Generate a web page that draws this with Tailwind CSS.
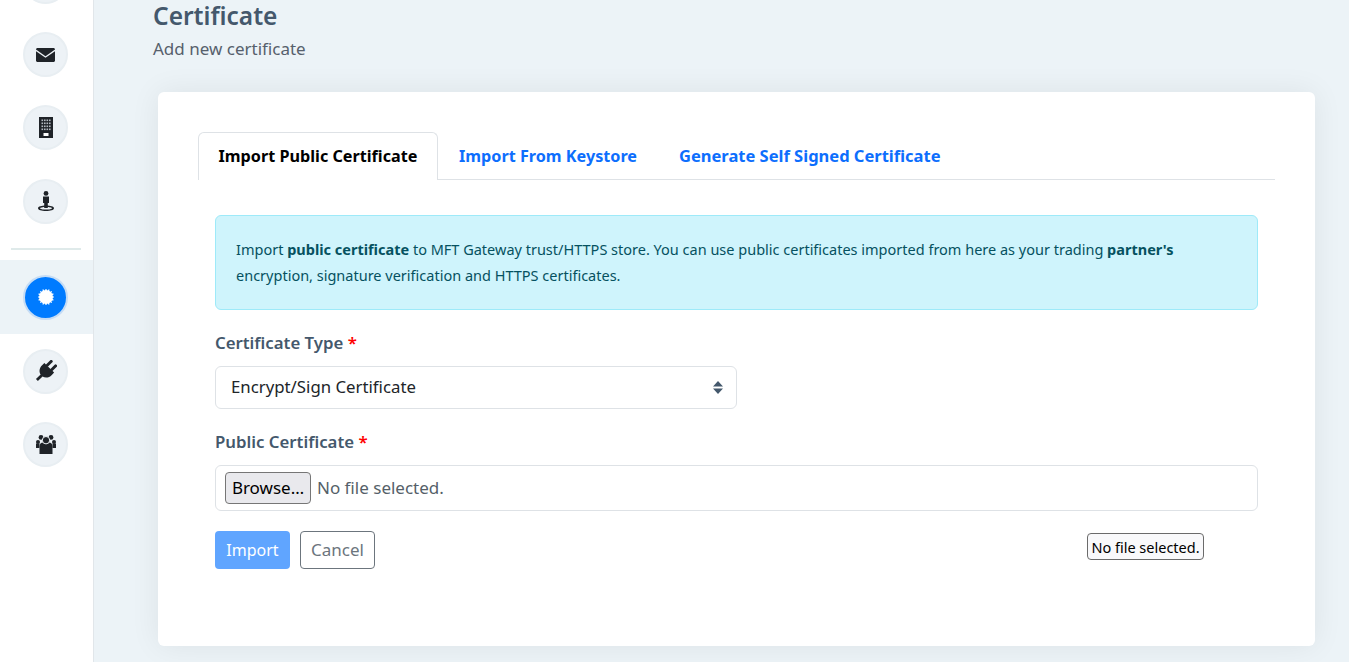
<!DOCTYPE html>
<html>
<head>
<meta charset="utf-8">
<script src="https://cdn.jsdelivr.net/npm/@tailwindcss/browser@4"></script>
</head>
<body class="m-0 h-[662px] w-[1349px] overflow-hidden bg-[#ecf3f7] font-['Noto_Sans',sans-serif]">
<div class="flex h-[662px] w-[1349px]">
  <aside class="flex h-full w-[94px] shrink-0 flex-col overflow-hidden border-r border-[#e1e6ea] bg-white">
    <div class="-mt-[55px] flex h-[73px] shrink-0 items-center justify-center pr-[2px]"><span class="h-[45px] w-[45px] rounded-full border-2 border-[#e8eef2] bg-[#edf2f6]"></span></div>
    <div class="flex h-[73px] shrink-0 items-center justify-center pr-[2px]">
      <span class="flex h-[45px] w-[45px] items-center justify-center rounded-full border-2 border-[#e8eef2] bg-[#edf2f6]">
        <svg class="h-[14px] w-[19px]" viewBox="0 0 19 14" fill="#1f2328"><path d="M0 1 1 0h17l1 1v.6L9.500 8.200 0 1.600z"/><path d="M0 3.200 9.500 9.800 19 3.200V13l-1 1H1l-1-1z"/></svg>
      </span>
    </div>
    <div class="flex h-[73px] shrink-0 items-center justify-center pr-[2px]">
      <span class="flex h-[45px] w-[45px] items-center justify-center rounded-full border-2 border-[#e8eef2] bg-[#edf2f6]">
        <svg class="h-[21px] w-[14px]" viewBox="0 0 14 21"><rect width="14" height="21" fill="#1f2328"/><g fill="#b4bac0"><rect x="2.500" y="2.500" width="1.600" height="1.600"/><rect x="5" y="2.500" width="1.600" height="1.600"/><rect x="7.500" y="2.500" width="1.600" height="1.600"/><rect x="10" y="2.500" width="1.600" height="1.600"/><rect x="2.500" y="5.500" width="1.600" height="1.600"/><rect x="5" y="5.500" width="1.600" height="1.600"/><rect x="7.500" y="5.500" width="1.600" height="1.600"/><rect x="10" y="5.500" width="1.600" height="1.600"/><rect x="2.500" y="8.500" width="1.600" height="1.600"/><rect x="5" y="8.500" width="1.600" height="1.600"/><rect x="7.500" y="8.500" width="1.600" height="1.600"/><rect x="10" y="8.500" width="1.600" height="1.600"/><rect x="2.500" y="11.500" width="1.600" height="1.600"/><rect x="5" y="11.500" width="1.600" height="1.600"/><rect x="7.500" y="11.500" width="1.600" height="1.600"/><rect x="10" y="11.500" width="1.600" height="1.600"/></g><rect x="4.500" y="16" width="5" height="3" fill="#fff"/></svg>
      </span>
    </div>
    <div class="flex h-[74px] shrink-0 items-center justify-center pr-[2px]">
      <span class="flex h-[45px] w-[45px] items-center justify-center rounded-full border-2 border-[#e8eef2] bg-[#edf2f6]">
        <svg class="h-[20px] w-[16px]" viewBox="0 0 16 20" fill="#1f2328"><circle cx="8" cy="2.400" r="2.400"/><path d="M5 5.500h6v6.500H9.800v5H6.200v-5H5z"/><path fill-rule="evenodd" d="M8 14.500c-4.400 0-8 1-8 2.700S3.600 20 8 20s8-1.100 8-2.800-3.600-2.700-8-2.700zm0 1.400c3.200 0 6 .6 6 1.300s-2.800 1.400-6 1.400-6-.7-6-1.400 2.800-1.300 6-1.300z"/></svg>
      </span>
    </div>
    <div class="ml-[11px] mt-[10px] h-[2px] w-[70px] shrink-0 bg-[#dfeaea]"></div>
    <div class="mt-[10px] flex h-[74px] shrink-0 items-center justify-center bg-[#ecf3f7] pr-[2px]">
      <span class="flex h-[45px] w-[45px] items-center justify-center rounded-full border-2 border-[#c5dcf5] bg-[#007bff]">
        <svg class="h-4 w-4" viewBox="0 0 16 16" fill="#fff"><circle cx="8" cy="8" r="7"/><g stroke="#fff" stroke-width="1.200"><path d="M8 0v16M0 8h16M2.300 2.300l11.400 11.400M13.700 2.300 2.300 13.700M4.900.6l6.200 14.800M11.100.6 4.900 15.400M.6 4.900l14.800 6.200M15.400 4.900.6 11.100"/></g></svg>
      </span>
    </div>
    <div class="flex h-[74px] shrink-0 items-center justify-center pr-[2px]">
      <span class="flex h-[45px] w-[45px] items-center justify-center rounded-full border-2 border-[#e8eef2] bg-[#edf2f6]">
        <svg class="h-[22px] w-[22px]" viewBox="0 0 24 24" fill="#1f2328"><g transform="rotate(45 12 12)"><rect x="7" y="-1" width="3.200" height="9" rx="1.400"/><rect x="13.800" y="-1" width="3.200" height="9" rx="1.400"/><path d="M4.500 7h15v3.500c0 4.500-2.500 7.500-6 8.300V26h-3v-7.200c-3.500-.8-6-3.800-6-8.300z"/></g></svg>
      </span>
    </div>
    <div class="flex h-[73px] shrink-0 items-center justify-center pr-[2px]">
      <span class="flex h-[45px] w-[45px] items-center justify-center rounded-full border-2 border-[#e8eef2] bg-[#edf2f6]">
        <svg class="h-[19px] w-[20px]" viewBox="0 0 20 19" fill="#1f2328"><circle cx="5" cy="2.400" r="2.400"/><circle cx="15" cy="2.400" r="2.400"/><circle cx="2" cy="7" r="2"/><circle cx="18" cy="7" r="2"/><path d="M0 8.500h3.500v4.500H0zM16.500 8.500H20v4.500h-3.500z"/><path d="M3.500 11.500c0-2.500 1.500-4 3.500-4h6c2 0 3.500 1.500 3.500 4V19h-13z"/><circle cx="10" cy="5.200" r="3.700" stroke="#edf2f6" stroke-width="1"/></svg>
      </span>
    </div>
  </aside>
  <main class="relative min-w-0 flex-1">
    <header class="ml-[59px]">
      <h1 class="m-0 text-[24.5px] font-semibold leading-[32px] text-[#44586c]">Certificate</h1>
      <p class="mt-[5px] text-[17px] leading-[24px] text-[#56606c]">Add new certificate</p>
    </header>
    <section class="relative ml-[64px] mt-[31px] h-[554px] w-[1157px] rounded-md bg-white px-[40px] pt-[40px] shadow-[0_0_30px_rgba(0,0,0,0.07)]">
      <nav class="flex h-[48px] border-b border-[#dee2e6]">
        <div class="-mb-px flex h-[48px] w-[240px] items-center justify-center rounded-t-md border border-b-0 border-[#dee2e6] bg-white text-[16.2px] font-bold text-black">Import Public Certificate</div>
        <div class="flex h-[48px] items-center px-[21px] text-[16.2px] font-bold text-[#0d6efd]">Import From Keystore</div>
        <div class="flex h-[48px] items-center px-[21px] text-[16.5px] font-bold text-[#0d6efd]">Generate Self Signed Certificate</div>
      </nav>
      <div class="mx-[17px] mt-[35px]">
        <div class="h-[95px] rounded-md border border-[#9eeaf9] bg-[#cff4fc] px-[20px] py-[20px] text-[14.5px] leading-[26px] text-[#055160]">Import <b>public certificate</b> to MFT Gateway trust/HTTPS store. You can use public certificates imported from here as your trading <b>partner's</b><br>encryption, signature verification and HTTPS certificates.</div>
        <label class="mt-[21px] block h-[24px] text-[16.8px] font-semibold leading-[24px] text-[#44586c]">Certificate Type <span class="text-[#ff0000]">*</span></label>
        <div class="mt-[11px] flex h-[43px] w-[522px] items-center justify-between rounded-md border border-[#dee2e6] bg-white pl-[15px] pr-[13px] text-[16.8px] text-[#212529]">
          <span class="pb-[2px]">Encrypt/Sign Certificate</span>
          <svg class="h-[13px] w-[10px]" viewBox="0 0 10 13" fill="#44586c"><path d="M5 0l5 5.500H0zM5 13 0 7.500h10z"/></svg>
        </div>
        <label class="mt-[21px] block h-[24px] text-[16.8px] font-semibold leading-[24px] text-[#44586c]">Public Certificate <span class="text-[#ff0000]">*</span></label>
        <div class="mt-[11px] flex h-[46px] items-center rounded-md border border-[#dee2e6] bg-white pl-[9px]">
          <span class="flex h-[32px] w-[86px] items-center justify-center rounded-[4px] border border-[#767676] bg-[#e9e9ed] text-[17px] text-black">Browse…</span>
          <span class="ml-[6px] text-[17px] text-[#555f69]">No file selected.</span>
        </div>
        <div class="mt-[20px] flex gap-[10px]">
          <span class="flex h-[38px] w-[75px] items-center justify-center rounded-[4px] bg-[#60a5ff] text-[16px] text-white">Import</span>
          <span class="flex h-[38px] w-[75px] items-center justify-center rounded-[4px] border border-[#6c757d] bg-white text-[17px] text-[#6c757d]">Cancel</span>
        </div>
      </div>
      <div class="absolute left-[929px] top-[441px] flex h-[27px] w-[117px] items-center justify-center rounded-[4px] border border-[#6b6b6b] bg-[#f9f9fb] pt-[2px] text-[14.5px] text-black">No file selected.</div>
    </section>
  </main>
</div>
</body>
</html>
